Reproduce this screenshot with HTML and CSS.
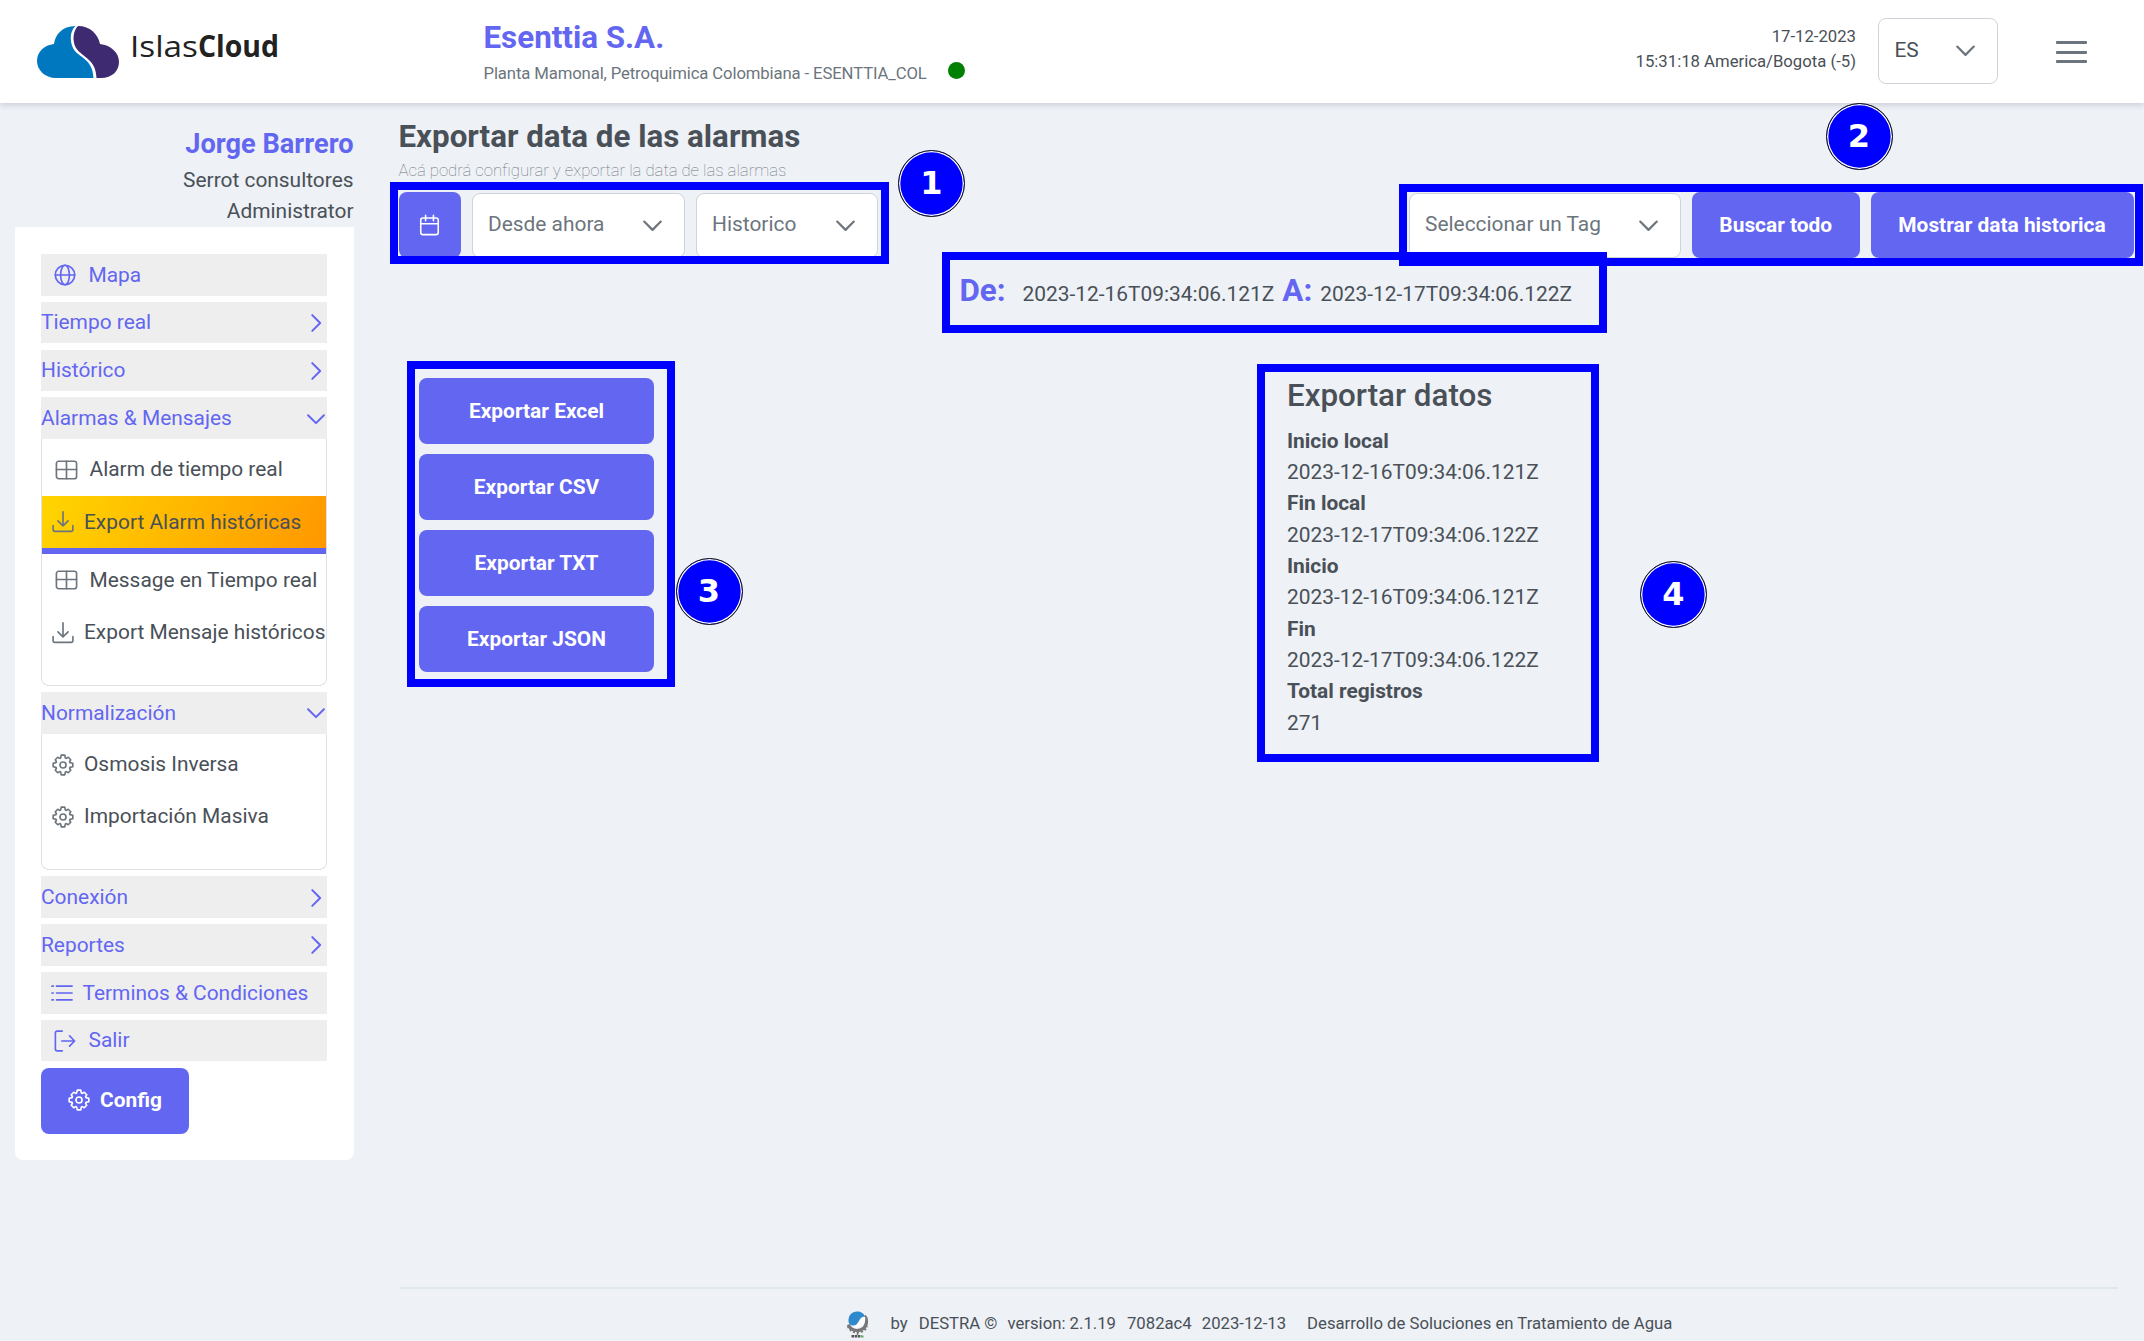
FILE: index.html
```html
<!DOCTYPE html>
<html lang="es">
<head>
<meta charset="utf-8">
<title>IslasCloud - Exportar data de las alarmas</title>
<link rel="stylesheet" href="styles.css">
</head>
<body>
<svg class="sprite" aria-hidden="true">
  <symbol id="globe" viewBox="0 0 24 24"><circle cx="12" cy="12" r="10.6"/><ellipse cx="12" cy="12" rx="4.8" ry="10.6"/><path d="M1.4 12h21.2"/></symbol>
  <symbol id="right" viewBox="0 0 24 24"><path d="M7.5 2.5L17 12l-9.500 9.500"/></symbol>
  <symbol id="down" viewBox="0 0 24 24"><path d="M2.500 7.500L12 17l9.500-9.500"/></symbol>
  <symbol id="table" viewBox="0 0 24 24"><rect x="1" y="2.500" width="22" height="19" rx="2.500"/><path d="M1 11.500h22M12 2.500v19"/></symbol>
  <symbol id="download" viewBox="0 0 24 24"><path d="M1.200 16v4.200a2 2 0 0 0 2 2h17.600a2 2 0 0 0 2-2V16M12 1v15M6.500 10.800L12 16.200l5.500-5.400"/></symbol>
  <symbol id="cog" viewBox="0 0 24 24"><path d="M10.100 1.300h3.800l.7 3.100.94.390 2.190-1.200 2.680 2.680-1.200 2.190.39.940 3.100.7v3.800l-3.100.7-.39.940 1.200 2.190-2.680 2.680-2.190-1.200-.94.390-.7 3.100h-3.800l-.7-3.100-.94-.390-2.190 1.200-2.680-2.680 1.200-2.190-.39-.940-3.100-.7v-3.800l3.100-.7.39-.940-1.200-2.190 2.680-2.680 2.190 1.200.94-.390z"/><circle cx="12" cy="12" r="3.300"/></symbol>
  <symbol id="list" viewBox="0 0 24 24"><path d="M6 4.500h17M6 12h17M6 19.500h17M1 4.500h1.500M1 12h1.500M1 19.500h1.500"/></symbol>
  <symbol id="logout" viewBox="0 0 24 24"><path d="M9 1.200H3.500a2 2 0 0 0-2 2v17.600a2 2 0 0 0 2 2H9M8.500 12h14M17 6.500l5.500 5.500-5.500 5.500"/></symbol>
  <symbol id="calendar" viewBox="0 0 24 24"><rect x="2" y="4" width="20" height="19" rx="2.500"/><path d="M2 10.500h20M7.500 1v6M16.500 1v6"/></symbol>
</svg>

<header class="topbar">
  <svg class="logo" viewBox="0 0 250 60">
    <path fill="#0078bf" d="M59.500 54H20C9 54 1 46 1 37c0-9 7-16 17-17 1-9 8-18 21.500-18C34 7 33.500 16 37 24c4 9 20 10 20.500 30z"/>
    <path fill="#3d2a70" d="M42 2c12 0 20 8 22 18 10 1 19 8 19 18 0 9-7 16-18 16h-4.500C60 35 47 34 40 24c-4-7-3-17 2-22z"/>
    <text x="94" y="33" textLength="68" lengthAdjust="spacingAndGlyphs">Islas</text>
    <text class="logo-bold" x="162" y="33" textLength="81" lengthAdjust="spacingAndGlyphs">Cloud</text>
  </svg>
  <div class="company">
    <div class="company-name">Esenttia S.A.</div>
    <div class="company-site">Planta Mamonal, Petroquimica Colombiana - ESENTTIA_COL<i class="online"></i></div>
  </div>
  <div class="clock">17-12-2023<br>15:31:18 America/Bogota (-5)</div>
  <div class="select lang"><span>ES</span><svg class="icon"><use href="#down"/></svg></div>
  <div class="burger"><i></i><i></i><i></i></div>
</header>

<div class="layout">
  <aside class="sidebar">
    <div class="user">
      <div class="user-name">Jorge Barrero</div>
      <div>Serrot consultores</div>
      <div>Administrator</div>
    </div>
    <nav class="menu">
      <a class="entry wide"><svg class="icon"><use href="#globe"/></svg>Mapa</a>
      <a class="entry group">Tiempo real<svg class="icon"><use href="#right"/></svg></a>
      <a class="entry group">Histórico<svg class="icon"><use href="#right"/></svg></a>
      <div>
        <a class="entry group">Alarmas &amp; Mensajes<svg class="icon"><use href="#down"/></svg></a>
        <div class="submenu">
          <a class="sub table"><svg class="icon"><use href="#table"/></svg>Alarm de tiempo real</a>
          <a class="sub active"><svg class="icon"><use href="#download"/></svg>Export Alarm históricas</a>
          <a class="sub table"><svg class="icon"><use href="#table"/></svg>Message en Tiempo real</a>
          <a class="sub"><svg class="icon"><use href="#download"/></svg>Export Mensaje históricos</a>
        </div>
      </div>
      <div>
        <a class="entry group">Normalización<svg class="icon"><use href="#down"/></svg></a>
        <div class="submenu">
          <a class="sub"><svg class="icon"><use href="#cog"/></svg>Osmosis Inversa</a>
          <a class="sub"><svg class="icon"><use href="#cog"/></svg>Importación Masiva</a>
        </div>
      </div>
      <a class="entry group">Conexión<svg class="icon"><use href="#right"/></svg></a>
      <a class="entry group">Reportes<svg class="icon"><use href="#right"/></svg></a>
      <a class="entry terms"><svg class="icon"><use href="#list"/></svg>Terminos &amp; Condiciones</a>
      <a class="entry wide"><svg class="icon"><use href="#logout"/></svg>Salir</a>
      <button class="btn config"><svg class="icon"><use href="#cog"/></svg>Config</button>
    </nav>
  </aside>

  <main class="content">
    <h1>Exportar data de las alarmas</h1>
    <p class="hint">Acá podrá configurar y exportar la data de las alarmas</p>
    <div class="toolbar">
      <button class="btn cal"><svg class="icon"><use href="#calendar"/></svg></button>
      <div class="select from"><span>Desde ahora</span><svg class="icon"><use href="#down"/></svg></div>
      <div class="select kind"><span>Historico</span><svg class="icon"><use href="#down"/></svg></div>
      <div class="select tag"><span>Seleccionar un Tag</span><svg class="icon"><use href="#down"/></svg></div>
      <button class="btn search">Buscar todo</button>
      <button class="btn show">Mostrar data historica</button>
    </div>
    <div class="range"><b>De:</b><span class="range-from">2023-12-16T09:34:06.121Z</span><b>A:</b><span class="range-to">2023-12-17T09:34:06.122Z</span></div>
    <div class="panels">
      <div class="exports">
        <button class="btn">Exportar Excel</button>
        <button class="btn">Exportar CSV</button>
        <button class="btn">Exportar TXT</button>
        <button class="btn">Exportar JSON</button>
      </div>
      <section class="summary">
        <h2>Exportar datos</h2>
        <dl>
          <dt>Inicio local</dt><dd>2023-12-16T09:34:06.121Z</dd>
          <dt>Fin local</dt><dd>2023-12-17T09:34:06.122Z</dd>
          <dt>Inicio</dt><dd>2023-12-16T09:34:06.121Z</dd>
          <dt>Fin</dt><dd>2023-12-17T09:34:06.122Z</dd>
          <dt>Total registros</dt><dd>271</dd>
        </dl>
      </section>
    </div>
    <footer class="footer">
      <svg class="destra" viewBox="0 0 22 27">
        <path fill="none" stroke="#777" stroke-width="3.200" d="M1.500 13.500c1 4 4.500 6 8.500 6 6 0 9.500-4 9.500-9 0-2-.5-4-2-5.500"/>
        <path fill="none" stroke="#777" stroke-width="2" stroke-dasharray="2 2" d="M.8 15c2 5 5.500 6.500 9.500 6.500s8-2 10.200-6"/>
        <path fill="#fff" d="M6 16.500C12 15 11 7.500 18 5.500c1.500 6-3 12.500-12 11z"/>
        <path fill="#2f89cd" d="M1.500 11C1 4 5 .5 10 .5c4 0 7 2 8 5-6 0-6 7-9.500 8.500-2.500 1-6 .5-7-3z"/>
        <path stroke="#555" stroke-width="2.600" stroke-dasharray="2.500 .6" d="M4.500 25.200h10"/><path stroke="#4b4" stroke-width="2" d="M14.500 25.500h2"/><path stroke="#777" stroke-width="1.500" d="M10.500 20v4"/>
      </svg>
      <span class="f-by">by</span><span class="f-name">DESTRA ©</span><span class="f-version">version: 2.1.19</span><span class="f-hash">7082ac4</span><span class="f-date">2023-12-13</span><span>Desarrollo de Soluciones en Tratamiento de Agua</span>
    </footer>
  </main>
</div>

<!-- guide markers laid over the page -->
<div class="frame frame-1"></div>
<div class="frame frame-2"></div>
<div class="frame frame-range"></div>
<div class="frame frame-3"></div>
<div class="frame frame-4"></div>
<div class="badge badge-1">1</div>
<div class="badge badge-2">2</div>
<div class="badge badge-3">3</div>
<div class="badge badge-4">4</div>
</body>
</html>
```
FILE: styles.css
```css
* { box-sizing: border-box; }
html { font-size: 20.9px; }
body {
  margin: 0;
  height: 1341px;
  position: relative;
  overflow: hidden;
  display: flex;
  flex-direction: column;
  background: #eef1f6;
  color: #495057;
  font-family: Roboto, "Liberation Sans", sans-serif;
  line-height: 31.33px;
}
h1, h2, p, dl, dd { margin: 0; }
.sprite { display: none; }
.icon {
  flex: none;
  width: 22px;
  height: 22px;
  fill: none;
  stroke: currentColor;
  stroke-width: 1.8;
  stroke-linecap: round;
  stroke-linejoin: round;
}
.btn {
  display: flex;
  align-items: center;
  justify-content: center;
  height: 66px;
  padding: 0 0 1px;
  border: 0;
  border-radius: 8px;
  background: #6366f1;
  color: #fff;
  font: 700 1rem Roboto, sans-serif;
}
.select {
  display: flex;
  align-items: center;
  justify-content: space-between;
  height: 65px;
  padding: 0 21px 0 15.500px;
  border: 1.5px solid #ced4da;
  border-radius: 8px;
  background: #fff;
  color: #6c757d;
}
.select .icon { width: 21px; height: 21px; stroke-width: 2.500; }

/* top bar */
.topbar {
  flex: none;
  position: relative;
  display: flex;
  align-items: flex-start;
  height: 103px;
  padding: 0 57px 0 36px;
  background: #fff;
  box-shadow: 0 2px 6px rgba(60, 70, 90, .2);
}
.logo {
  width: 250px;
  height: 60px;
  margin: 24px 197.500px 0 0;
  font: 30px "Open Sans", sans-serif;
  fill: #222;
}
.logo-bold { font-weight: 700; }
.company { margin-top: 14px; }
.company-name { font-size: 1.500rem; font-weight: 700; color: #6366f1; line-height: 47px; }
.company-site { display: flex; align-items: center; font-size: .8rem; line-height: 24px; letter-spacing: -.125px; color: #6c757d; }
.online { width: 17px; height: 17px; margin: -6px 0 0 21px; border-radius: 50%; background: green; }
.clock { margin: 24px 22px 0 auto; text-align: right; font-size: .8rem; line-height: 25px; }
.lang { width: 120px; height: 65.500px; margin-top: 18px; color: #495057; padding-right: 21px; }
.lang .icon { color: #6c757d; }
.burger { display: flex; flex-direction: column; gap: 6.500px; margin: 41px 0 0 58px; }
.burger i { width: 31px; height: 3px; border-radius: 1px; background: #6c757d; }

.layout { flex: 1; display: flex; min-height: 0; }

/* sidebar */
.sidebar { width: 338.500px; margin-left: 15px; }
.user { height: 124px; padding-top: 22px; text-align: right; }
.user-name { font-size: 1.300rem; font-weight: 700; line-height: 39.500px; color: #6366f1; }
.menu {
  display: flex;
  flex-direction: column;
  gap: 6.200px;
  height: 933px;
  padding: 27px 27px 0 26px;
  border-radius: 0 0 8px 8px;
  background: #fff;
}
.entry { display: flex; align-items: center; height: 41.600px; padding-top: 1px; background: #eee; color: #6366f1; }
.group { justify-content: space-between; }
.wide { padding-left: 12.500px; gap: 13px; }
.terms { padding-left: 9.500px; gap: 10px; }
.group .icon { width: 20px; height: 20px; margin-right: 1px; stroke-width: 2.400; }
.submenu {
  display: flex;
  flex-direction: column;
  padding: 5px 0 26.200px;
  border: 1px solid #dee2e6;
  border-top: 0;
  border-radius: 0 0 8px 8px;
}
.sub { display: flex; align-items: center; gap: 10px; height: 52.200px; padding-left: 10px; white-space: nowrap; }
.sub .icon { color: #6c757d; }
.table { padding-left: 12.500px; gap: 12px; }
.table .icon { width: 23px; }
.active { height: 58.200px; border-bottom: 6px solid #6366f1; background: linear-gradient(110deg, #ffd500, #ff9800); }
.config { width: 148px; gap: 10px; }

/* main column */
.content { flex: 1; display: flex; flex-direction: column; margin-left: 45px; }
h1 { margin-top: 14px; font-size: 1.500rem; font-weight: 700; line-height: 40px; }
.hint { margin-top: 1px; font-size: .8rem; font-weight: 100; line-height: 25px; color: #6c757d; }
.toolbar { display: flex; align-items: center; height: 66px; margin-top: 9px; }
.cal { width: 62px; }
.cal .icon { width: 21px; height: 22px; }
.from { width: 213px; margin-left: 11px; }
.kind { width: 182px; margin-left: 11px; }
.tag { width: 272px; margin-left: 531px; }
.search { width: 168.500px; margin-left: 11px; }
.show { width: 263px; margin-left: 10.500px; }
.range { display: flex; align-items: baseline; height: 102px; margin: 17px 0 0 561px; line-height: 32px; }
.range b { font-size: 1.500rem; color: #6366f1; }
.range-from { margin: 0 8px 0 17px; }
.range-to { margin-left: 8px; }
.panels { display: flex; }
.exports { display: flex; flex-direction: column; gap: 10.100px; width: 235px; margin: 1px 0 0 20.500px; }
.summary { margin-left: 633px; }
h2 { font-size: 1.500rem; font-weight: 500; line-height: 38px; }
dl { margin-top: 10.700px; }
dt { font-weight: 700; }
.footer {
  display: flex;
  align-items: center;
  height: 54px;
  margin: auto 26px 0 0;
  padding: 18px 0 0 448px;
  border-top: 2px solid #dfe7ef;
  font-size: .8rem;
}
.destra { width: 22px; height: 27px; margin-right: 22px; }
.f-by, .f-version { margin-right: 11px; }
.f-name, .f-hash { margin-right: 10px; }
.f-date { margin-right: 21px; }

/* guide markers */
.frame { position: absolute; border: 8.700px solid #00f; }
.frame-1 { left: 389.500px; top: 182px; width: 499px; height: 82px; }
.frame-2 { left: 1399px; top: 183.500px; width: 744px; height: 82px; }
.frame-range { left: 942px; top: 252.300px; width: 664.500px; height: 80.700px; }
.frame-3 { left: 407px; top: 361px; width: 268px; height: 326px; }
.frame-4 { left: 1257px; top: 364px; width: 342px; height: 398px; }
.badge {
  position: absolute;
  width: 67px;
  height: 67px;
  border: 1.500px solid #111;
  border-radius: 50%;
  background: #00f;
  box-shadow: inset 0 0 0 1.300px #fff;
  color: #fff;
  font: 700 32px/64px "DejaVu Sans", sans-serif;
  text-align: center;
}
.badge-1 { left: 898px; top: 150px; }
.badge-2 { left: 1825.500px; top: 102.500px; }
.badge-3 { left: 675.500px; top: 557.500px; }
.badge-4 { left: 1640px; top: 560.500px; }
```
